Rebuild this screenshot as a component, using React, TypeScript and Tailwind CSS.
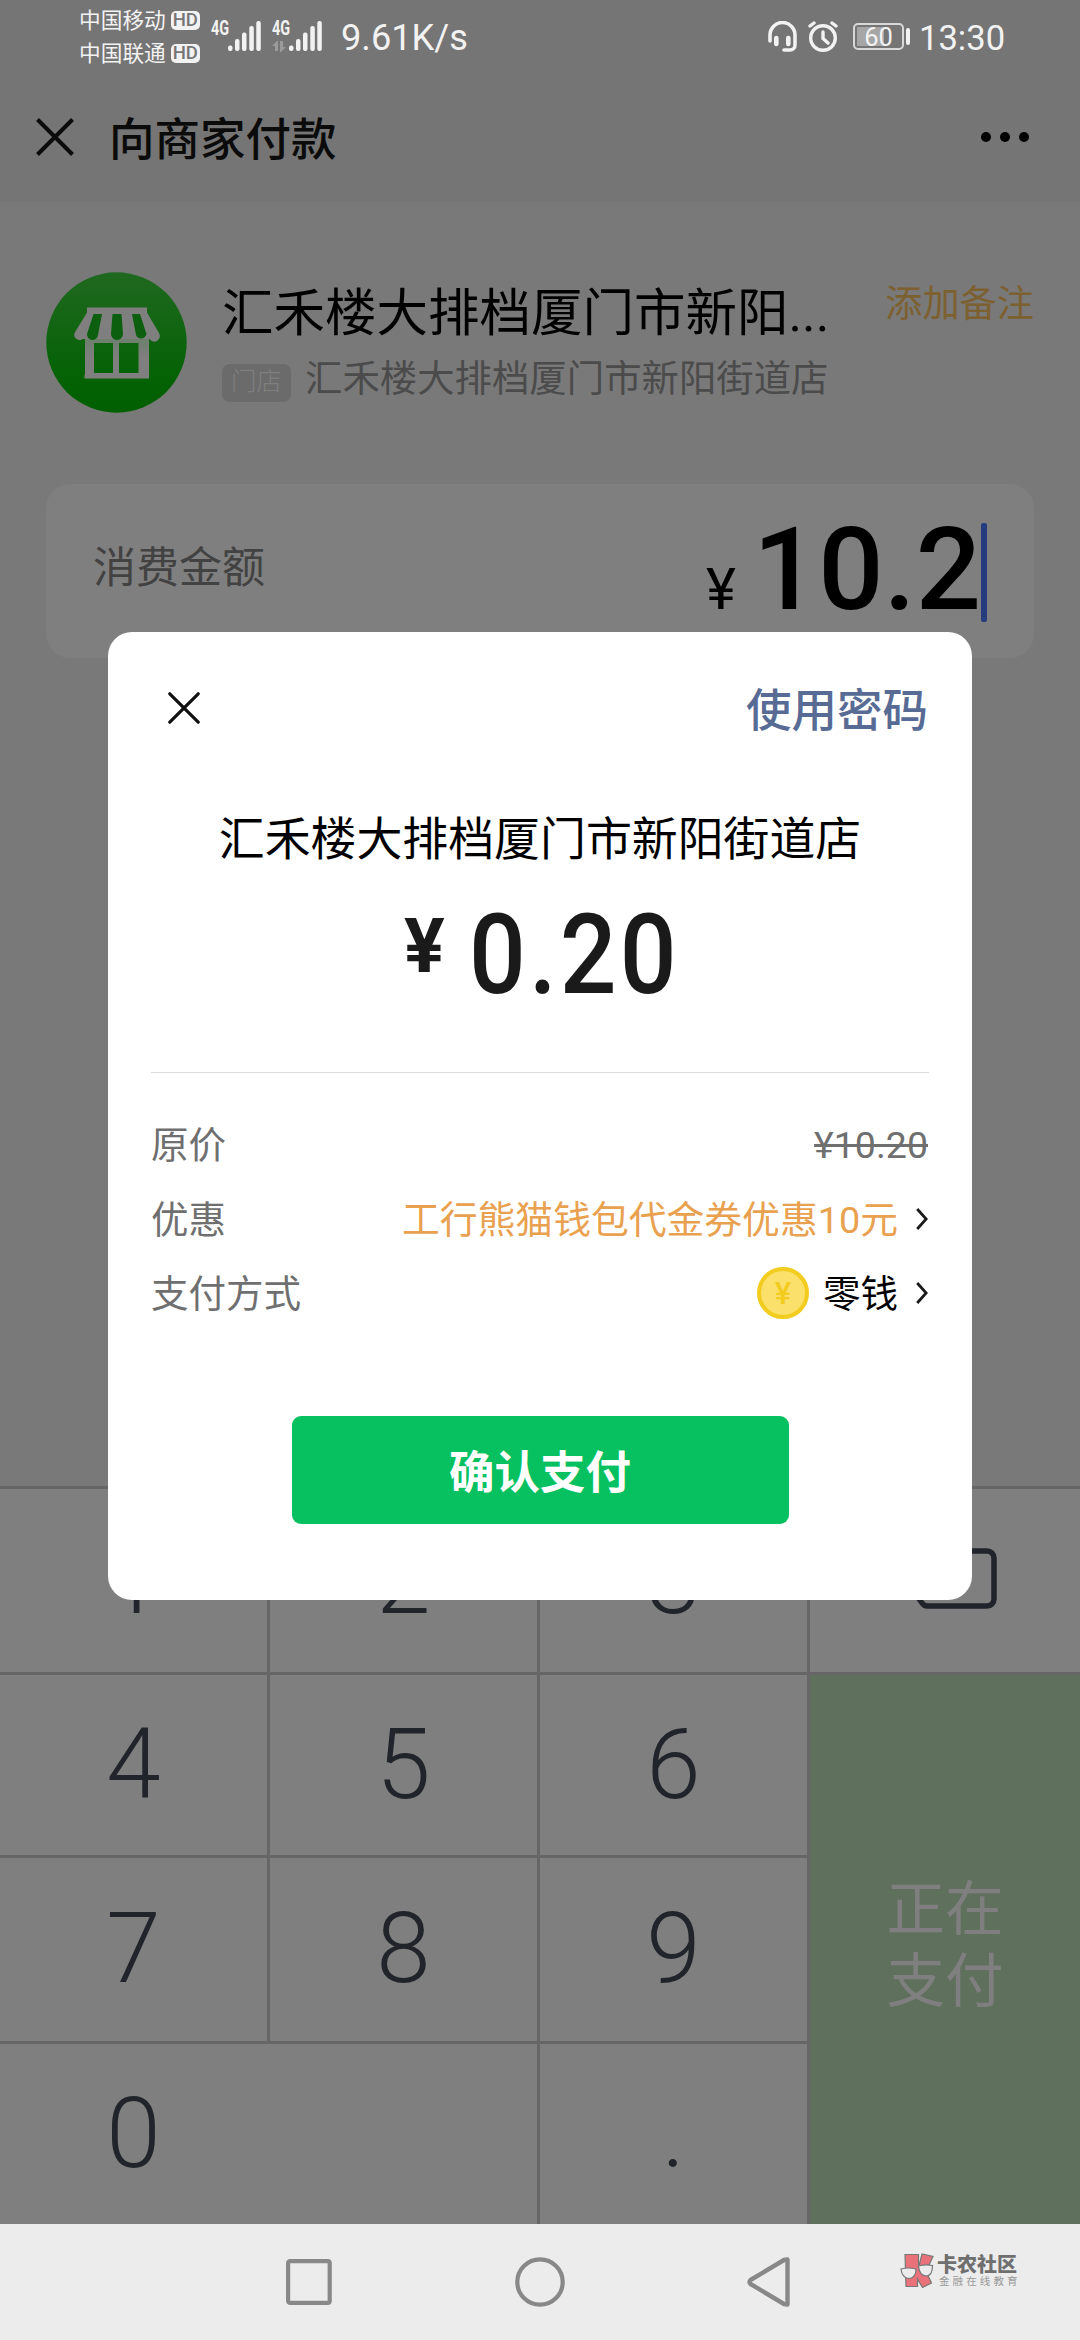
const keys = ['1', '2', '3', '4', '5', '6', '7', '8', '9'];

function SignalBars() {
  return (
    <svg width="33" height="30" viewBox="0 0 33 30" fill="#f2f2f2">
      <rect x="0" y="24.5" width="4.5" height="5.5" rx="2" />
      <rect x="7" y="18" width="4.5" height="12" rx="2" />
      <rect x="14" y="11.5" width="4.5" height="18.5" rx="2" />
      <rect x="21.3" y="5" width="4.5" height="25" rx="2" />
      <rect x="28.3" y="0" width="4.5" height="30" rx="2" />
    </svg>
  );
}

function Carrier({ name }: { name: string }) {
  return (
    <div className="flex h-[33px] items-center gap-[5px]">
      <span className="text-[21.7px] leading-none whitespace-nowrap">{name}</span>
      <span className="flex h-[19px] w-[29px] items-center justify-center rounded-[5px] bg-[#f2f2f2] text-[18.5px] leading-none font-medium text-[#757575]">
        HD
      </span>
    </div>
  );
}

function StatusBar() {
  return (
    <div className="flex h-[72px] items-start pl-[79px] text-[#f2f2f2]">
      <div className="w-[132px] pt-[4px]">
        <Carrier name="中国移动" />
        <Carrier name="中国联通" />
      </div>
      <div className="flex w-[61px] pt-[21px]">
        <span className="w-[17px] origin-left scale-x-[.74] text-[19.5px] leading-[15px] font-bold">4G</span>
        <SignalBars />
      </div>
      <div className="flex w-[69px] pt-[21px]">
        <div className="w-[17px]">
          <div className="w-[17px] origin-left scale-x-[.74] text-[19.5px] leading-[15px] font-bold">4G</div>
          <svg className="mt-[5px]" width="14" height="11" viewBox="0 0 14 11" fill="#9b9b9b">
            <path d="M0 5 5 0h1v10H3V5zM8 0h3v6h3l-5 5H8z" />
          </svg>
        </div>
        <SignalBars />
      </div>
      <span className="w-[427px] pt-[18px] text-[36.2px] leading-[40px]">9.61K/s</span>
      <svg className="mt-[21px] mr-[11px] shrink-0" width="29" height="31" viewBox="0 0 29 31" fill="none" stroke="#f2f2f2" strokeLinecap="round">
        <path d="M2 20v-6a12.5 12.5 0 0 1 25 0v10a5 5 0 0 1-5 5h-6" strokeWidth="3.6" />
        <path d="M8.3 17v6M20.3 17v6" strokeWidth="4.6" />
      </svg>
      <svg className="mt-[21px] mr-[15px] shrink-0" width="30" height="31" viewBox="0 0 30 31" fill="none" stroke="#f2f2f2" strokeWidth="3.4" strokeLinecap="round">
        <circle cx="15" cy="17" r="12.3" />
        <path d="M15 11v6.500l5 4.500M2 5l4-3M28 5l-4-3" />
      </svg>
      <div className="mt-[23px] flex h-[27px] shrink-0 items-center gap-[2px]">
        <div className="relative h-[27px] w-[51px] rounded-[5px] border-2 border-[#d8d8d8] p-[2px]">
          <div className="h-full w-[27px] bg-[#a6a6a6]" />
          <span className="absolute inset-0 text-center text-[25.5px] leading-[24px]">60</span>
        </div>
        <div className="h-[17px] w-[4px] rounded-full bg-[#f2f2f2]" />
      </div>
      <span className="pt-[18px] pl-[9px] text-[34.6px] leading-[40px]">13:30</span>
    </div>
  );
}

function StoreLogo() {
  return (
    <svg className="shrink-0" width="141" height="141" viewBox="0 0 141 141">
      <defs>
        <linearGradient id="disc" x1="0" y1="0" x2="0" y2="1">
          <stop offset="0" stopColor="#206820" />
          <stop offset=".75" stopColor="#046204" />
          <stop offset="1" stopColor="#005f00" />
        </linearGradient>
        <linearGradient id="frame" x1="0" y1="0" x2="0" y2="1">
          <stop offset="0" stopColor="#6a806a" />
          <stop offset=".5" stopColor="#7f7f7f" />
        </linearGradient>
      </defs>
      <circle cx="70.500" cy="70.500" r="70.200" fill="url(#disc)" />
      <path fillRule="evenodd" fill="url(#frame)" d="M39 64h64v42.500H38.500v-4H39zM48 71v30h19V71zM73 71v30h19.500V71z" />
      <path
        fill="#7f7f7f"
        d="M41 35.500h60v5l12 20.500a5.500 5.500 0 0 1-9.500 6H37a5.500 5.500 0 0 1-8.500-6L41 40.500z"
      />
      <path fill="#0d5f10" d="M47.500 42h8.500l-4 21a5.500 5.500 0 0 1-11-1zM66.500 42h9l1.500 20a6 6 0 0 1-12 0zM86 42h8l6.500 20a5.500 5.500 0 0 1-10.500 1z" />
    </svg>
  );
}

function Header() {
  return (
    <div className="flex h-[130px] items-center">
      <svg className="ml-[36px]" width="38" height="38" viewBox="0 0 38 38" stroke="#0b0b0b" strokeWidth="4">
        <path d="M1.500 1.500l35 35M36.500 1.500l-35 35" />
      </svg>
      <h1 className="ml-[35px] flex-1 pt-[7px] text-[45.500px] leading-none font-medium text-[#0b0b0b]">向商家付款</h1>
      <div className="mr-[51px] flex gap-[9px]">
        <span className="size-[10px] rounded-full bg-black" />
        <span className="size-[10px] rounded-full bg-black" />
        <span className="size-[10px] rounded-full bg-black" />
      </div>
    </div>
  );
}

function Merchant() {
  return (
    <div className="flex h-[282px] items-start pt-[70px] pr-[46px] pl-[46px]">
      <StoreLogo />
      <div className="ml-[35px] pt-[16px]">
        <div className="w-[610px] text-[51.500px] leading-[52px] whitespace-nowrap text-black">汇禾楼大排档厦门市新阳...</div>
        <div className="mt-[18px] flex h-[44px] items-center text-[#4b4b4b]">
          <span className="mt-[5px] flex h-[38px] w-[69px] items-center justify-center rounded-[8px] bg-[#6b6b6b] pb-[2px] text-[25.500px] leading-none font-light text-[#7f7f7f]">
            门店
          </span>
          <span className="ml-[14px] text-[37.400px] leading-none whitespace-nowrap">汇禾楼大排档厦门市新阳街道店</span>
        </div>
      </div>
      <div className="ml-auto pt-[12px] text-[37.200px] leading-[40px] whitespace-nowrap text-[#7d6030]">添加备注</div>
    </div>
  );
}

function Keypad() {
  return (
    <div className="flex h-[738px] border-t-[3px] border-[#666] bg-[#7f7f7f] text-[98px] leading-none font-light text-[#21252b]">
      <div className="grid w-[810px] grid-cols-3 grid-rows-[186px_183px_186px_180px]">
        {keys.map((key) => (
          <div key={key} className="flex items-center justify-center border-r-[3px] border-b-[3px] border-[#666] pb-px">
            {key}
          </div>
        ))}
        <div className="col-span-2 flex items-center border-r-[3px] border-[#666] pb-px">
          <span className="w-[267px] text-center">0</span>
        </div>
        <div className="flex items-center justify-center border-r-[3px] border-[#666] pb-px">.</div>
      </div>
      <div className="flex w-[270px] flex-col">
        <div className="flex h-[186px] items-center justify-end border-b-[3px] border-[#666] pr-[83px] pb-[4px]">
          <svg width="94" height="61" viewBox="0 0 94 61" fill="none" stroke="#21252b" strokeWidth="5.500">
            <path d="M24 3h60a7 7 0 0 1 7 7v41a7 7 0 0 1-7 7H24q-3 0-5-3L4 34q-2-3.500 0-7L19 6q2-3 5-3z" />
            <path d="M42 20l20 21M62 20L42 41" />
          </svg>
        </div>
        <div className="flex flex-1 flex-col items-center justify-center bg-[#5f705d] pb-[8px] text-[58.600px] leading-[72px] font-normal text-[#7f7f7f]">
          <span>正在</span>
          <span>支付</span>
        </div>
      </div>
    </div>
  );
}

function Chevron() {
  return (
    <svg className="mb-[4px] ml-[18px]" width="12" height="22" viewBox="0 0 12 22" fill="none" stroke="#1a1a1a" strokeWidth="2.800">
      <path d="M1.200 1l9 10-9 10" />
    </svg>
  );
}

function PayDialog() {
  return (
    <div className="absolute top-[632px] left-[108px] flex h-[968px] w-[864px] flex-col rounded-[24px] bg-white">
      <div className="flex h-[152px] items-center justify-between pr-[44px] pl-[60px]">
        <svg width="32" height="32" viewBox="0 0 32 32" stroke="#111" strokeWidth="3.200" strokeLinecap="round">
          <path d="M1.800 1.800l28.400 28.400M30.200 1.800L1.800 30.200" />
        </svg>
        <span className="pt-[8px] text-[45.500px] leading-none font-medium text-[#576b95]">使用密码</span>
      </div>
      <div className="mt-[30px] text-center text-[45.900px] leading-[50px] whitespace-nowrap text-black">汇禾楼大排档厦门市新阳街道店</div>
      <div className="mt-[34px] flex h-[111px] pl-[296px] text-[#1a1a1a]">
        <span className="mt-[10px] text-[76px] leading-[76px] font-bold">¥</span>
        <span className="ml-[24px] origin-left scale-x-[.9] text-[111px] leading-[115px] font-medium tracking-[3.500px]">0.20</span>
      </div>
      <div className="mx-[43px] mt-[63px] h-px bg-[#dcdcdc]" />
      <div className="mt-[36px] pr-[44px] pl-[43px] text-[37.500px] leading-none text-[#6f6f6f]">
        <div className="flex h-[74px] items-center justify-between">
          <span>原价</span>
          <span className="line-through">¥10.20</span>
        </div>
        <div className="flex h-[75px] items-center">
          <span>优惠</span>
          <span className="ml-auto text-[37.800px] text-[#e9a14f]">工行熊猫钱包代金券优惠10元</span>
          <Chevron />
        </div>
        <div className="flex h-[74px] items-center">
          <span>支付方式</span>
          <span className="mb-[4px] ml-auto flex size-[52px] items-center justify-center rounded-full border-4 border-[#f2cc1f] bg-[#fbe06b] text-[31px] font-medium text-[#f2cc1f]">
            ¥
          </span>
          <span className="ml-[14px] text-black">零钱</span>
          <Chevron />
        </div>
      </div>
      <button className="mx-auto mt-[84px] h-[108px] w-[497px] rounded-[9px] bg-[#07c160] pt-[7px] text-[45.500px] leading-none font-bold text-white">
        确认支付
      </button>
    </div>
  );
}

function Watermark() {
  return (
    <div className="absolute top-[29px] left-[900px] flex">
      <svg width="34" height="36" viewBox="0 0 34 36" fill="#e8717a" stroke="#777" strokeWidth="1.200">
        <path d="M5 1.500h13.500v13L22 1l11 2.500-7 15L31.500 30l-9 4.500L17.500 26v7.500H6z" />
        <path d="M1 16q7-2 15 0 0 9-7 9.500Q2 25 1 16zM18.500 13q7-2 14-.5 0 10-6 10.500-7 0-8-10z" fill="#ececec" />
      </svg>
      <div className="ml-[3px] pt-px whitespace-nowrap">
        <div className="text-[20px] leading-[22px] font-black text-[#6f6f6f]">卡农社区</div>
        <div className="ml-[2px] text-[10.500px] leading-[11px] tracking-[3.100px] text-[#999]">金融在线教育</div>
      </div>
    </div>
  );
}

function NavBar() {
  return (
    <div className="relative flex h-[116px] items-start bg-[#ececec] pt-[33px] pl-[286px]">
      <svg width="46" height="50" viewBox="0 0 46 50" fill="none" stroke="#888" strokeWidth="4.200">
        <rect x="2.100" y="4.100" width="41.600" height="41.800" rx="2" />
      </svg>
      <svg className="ml-[183px]" width="50" height="50" viewBox="0 0 50 50" fill="none" stroke="#888" strokeWidth="4.200">
        <circle cx="25" cy="25" r="22.700" />
      </svg>
      <svg className="ml-[182px]" width="43" height="50" viewBox="0 0 43 50" fill="none" stroke="#888" strokeWidth="4.400" strokeLinejoin="round">
        <path d="M40.500 2.500v45L37 47 3.500 27q-2-2 0-4L37 3z" />
      </svg>
      <Watermark />
    </div>
  );
}

export default function App() {
  return (
    <div className="relative flex h-[2340px] w-[1080px] flex-col overflow-hidden bg-[#797979] font-[Roboto,'Noto_Sans_CJK_SC',sans-serif]">
      <div className="h-[202px] bg-[#757575]">
        <StatusBar />
        <Header />
      </div>
      <Merchant />
      <div className="mx-[46px] flex h-[174px] items-start rounded-[24px] bg-[#7f7f7f] pl-[47px]">
        <span className="pt-[59px] text-[43px] leading-[50px] text-[#424242]">消费金额</span>
        <div className="ml-auto flex items-baseline text-black">
          <span className="text-[57px] leading-none">¥</span>
          <span className="ml-[17px] text-[115px] leading-[172px] font-medium">10.2</span>
        </div>
        <span className="mt-[39px] mr-[47px] h-[99px] w-[6px] rounded-[2px] bg-[#253b7d]" />
      </div>
      <div className="flex-1" />
      <Keypad />
      <NavBar />
      <PayDialog />
    </div>
  );
}
